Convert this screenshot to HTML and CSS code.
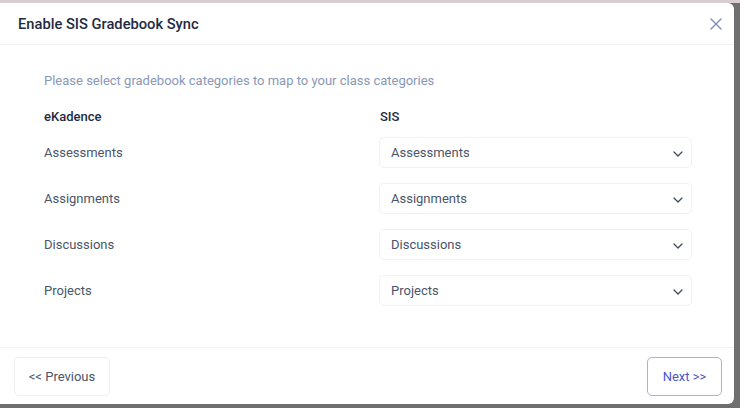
FILE: index.html
```html
<!DOCTYPE html>
<html lang="en">
<head>
    <meta charset="UTF-8">
    <meta name="viewport" content="width=device-width, initial-scale=1.0">
    <title>Enable SIS Gradebook Sync</title>
    <link rel="stylesheet" href="styles.css">
</head>
<body>
    <div class="page-strip"></div>
    <div class="modal">
        <div class="modal-header">
            <h1>Enable SIS Gradebook Sync</h1>
            <button class="close-btn" type="button" aria-label="Close">
                <svg width="12" height="12" viewBox="0 0 12 12">
                    <path d="M1 1L11 11M11 1L1 11" stroke="currentColor" stroke-width="1.4" stroke-linecap="round"/>
                </svg>
            </button>
        </div>

        <div class="modal-body">
            <p class="intro">Please select gradebook categories to map to your class categories</p>

            <div class="mapping">
                <div class="col-title">eKadence</div>
                <div class="col-title">SIS</div>

                <div class="cat-label">Assessments</div>
                <div class="select-box">
                    <span>Assessments</span>
                    <svg class="chevron" width="10" height="6" viewBox="0 0 10 6"><path d="M1 1L5 5L9 1" fill="none" stroke="currentColor" stroke-width="1.3" stroke-linecap="round" stroke-linejoin="round"/></svg>
                </div>

                <div class="cat-label">Assignments</div>
                <div class="select-box">
                    <span>Assignments</span>
                    <svg class="chevron" width="10" height="6" viewBox="0 0 10 6"><path d="M1 1L5 5L9 1" fill="none" stroke="currentColor" stroke-width="1.3" stroke-linecap="round" stroke-linejoin="round"/></svg>
                </div>

                <div class="cat-label">Discussions</div>
                <div class="select-box">
                    <span>Discussions</span>
                    <svg class="chevron" width="10" height="6" viewBox="0 0 10 6"><path d="M1 1L5 5L9 1" fill="none" stroke="currentColor" stroke-width="1.3" stroke-linecap="round" stroke-linejoin="round"/></svg>
                </div>

                <div class="cat-label">Projects</div>
                <div class="select-box">
                    <span>Projects</span>
                    <svg class="chevron" width="10" height="6" viewBox="0 0 10 6"><path d="M1 1L5 5L9 1" fill="none" stroke="currentColor" stroke-width="1.3" stroke-linecap="round" stroke-linejoin="round"/></svg>
                </div>
            </div>
        </div>

        <div class="modal-footer">
            <button class="btn btn-prev" type="button">&lt;&lt; Previous</button>
            <button class="btn btn-next" type="button">Next &gt;&gt;</button>
        </div>
    </div>
</body>
</html>
```

FILE: styles.css
```css
:root {
    --overlay: #6f6f6f;
    --text: #1f2a44;
    --muted: #8898b6;
    --label: #4a5568;
    --line: #f0f1f4;
    --indigo: #4b56c9;
}

* {
    margin: 0;
    padding: 0;
    box-sizing: border-box;
}

body {
    font-family: 'Roboto', 'Liberation Sans', sans-serif;
    background: var(--overlay);
    color: var(--text);
    height: 408px;
    overflow: hidden;
}

.page-strip {
    height: 3px;
    background: #d8cfd0;
}

.modal {
    width: 744px;
    height: 401px;
    margin-left: -10px;
    background: #ffffff;
    border-radius: 6px;
    display: flex;
    flex-direction: column;
}

.modal-header {
    height: 42px;
    display: flex;
    align-items: center;
    justify-content: space-between;
    padding: 0 12px 0 28px;
    border-bottom: 1px solid var(--line);
}

h1 {
    font-size: 14.7px;
    font-weight: 500;
    color: var(--text);
}

.close-btn {
    background: none;
    border: none;
    color: #7d8eb2;
    width: 12px;
    height: 12px;
    display: flex;
}

.modal-body {
    flex: 1;
    padding: 28px 42px 0 54px;
}

.intro {
    font-size: 13px;
    color: var(--muted);
    line-height: 16px;
}

.mapping {
    display: grid;
    grid-template-columns: 313px 313px;
    column-gap: 22px;
    row-gap: 15px;
    align-items: center;
    margin-top: 20px;
}

.col-title {
    font-size: 13px;
    font-weight: 500;
    color: var(--text);
    line-height: 16px;
    margin-bottom: -3px;
}

.col-title + .col-title {
    margin-left: 1px;
}

.cat-label {
    font-size: 13px;
    color: var(--label);
}

.select-box {
    height: 31px;
    border: 1px solid #f0f1f3;
    border-radius: 5px;
    display: flex;
    align-items: center;
    justify-content: space-between;
    padding: 0 8px 0 11px;
    font-size: 13px;
    color: var(--label);
}

.chevron {
    color: #3f4a5e;
    margin-top: 2px;
}

.modal-footer {
    height: 57px;
    border-top: 1px solid #f3f4f6;
    display: flex;
    align-items: center;
    justify-content: space-between;
    padding: 1px 12px 0 24px;
}

.btn {
    font-family: inherit;
    font-size: 13px;
    background: #ffffff;
    height: 39px;
    border-radius: 5px;
    cursor: pointer;
}

.btn-prev {
    width: 96px;
    border: 1px solid #eef0f3;
    color: var(--label);
}

.btn-next {
    width: 75px;
    border: 1px solid #a7b0ec;
    color: var(--indigo);
}
```
